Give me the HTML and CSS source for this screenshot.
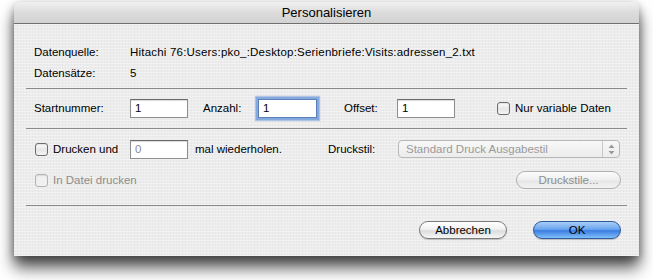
FILE: index.html
```html
<!DOCTYPE html>
<html lang="de">
<head>
    <meta charset="UTF-8">
    <title>Personalisieren</title>
    <link rel="stylesheet" href="styles.css">
</head>
<body>
    <div class="window">
        <div class="titlebar">Personalisieren</div>
        <div class="content">
            <div class="info">
                <div class="info-row">
                    <span class="info-label">Datenquelle:</span>
                    <span class="info-path">Hitachi 76:Users:pko_:Desktop:Serienbriefe:Visits:adressen_2.txt</span>
                </div>
                <div class="info-row">
                    <span class="info-label">Datensätze:</span>
                    <span>5</span>
                </div>
            </div>
            <hr class="sep">
            <div class="numbers">
                <span class="lbl lbl-start">Startnummer:</span>
                <input class="field" type="text" value="1">
                <span class="lbl lbl-count">Anzahl:</span>
                <input class="field field-count focused" type="text" value="1">
                <span class="lbl lbl-offset">Offset:</span>
                <input class="field" type="text" value="1">
                <label class="check check-variable"><span class="box"></span>Nur variable Daten</label>
            </div>
            <hr class="sep">
            <div class="print">
                <div class="print-row">
                    <label class="check check-repeat"><span class="box"></span>Drucken und</label>
                    <input class="field field-times" type="text" value="0">
                    <span class="lbl lbl-times">mal wiederholen.</span>
                    <span class="lbl lbl-style">Druckstil:</span>
                    <div class="select disabled">
                        <span>Standard Druck Ausgabestil</span>
                        <span class="stepper">
                            <svg width="7" height="11" viewBox="0 0 7 11"><path d="M3.5 0.5 L6.5 4 H0.5 Z M3.5 10.5 L6.5 7 H0.5 Z" fill="#9a9a9a"/></svg>
                        </span>
                    </div>
                </div>
                <div class="print-row">
                    <label class="check disabled"><span class="box"></span>In Datei drucken</label>
                    <button class="pill pill-styles" disabled>Druckstile...</button>
                </div>
            </div>
            <hr class="sep">
            <div class="actions">
                <button class="pill">Abbrechen</button>
                <button class="pill pill-default">OK</button>
            </div>
        </div>
    </div>
</body>
</html>
```

FILE: styles.css
```css
* {
    box-sizing: border-box;
    margin: 0;
    padding: 0;
}

html,
body {
    min-height: 280px;
}

body {
    background-color: #fff;
    font-family: 'Liberation Sans', Arial, sans-serif;
    font-size: 11.5px;
    color: #000;
    padding: 2px 0 24px 14px;
}

.window {
    width: 625px;
    height: 254px;
    border-radius: 6px 6px 0 0;
    background-color: #ececec;
    background-image: repeating-linear-gradient(0deg, rgba(255, 255, 255, 0.35) 0 1px, transparent 1px 3px),
        repeating-linear-gradient(90deg, rgba(0, 0, 0, 0.02) 0 1px, transparent 1px 3px);
    box-shadow: 0 12px 16px rgba(0, 0, 0, 0.65), 0 3px 10px rgba(0, 0, 0, 0.35);
    overflow: hidden;
}

.titlebar {
    height: 22px;
    line-height: 21px;
    text-align: center;
    font-size: 13px;
    background: linear-gradient(#f0f0f0, #dcdcdc 50%, #d2d2d2);
    border-bottom: 1px solid #6f6f6f;
}

.content {
    padding: 0 12px;
}

.sep {
    border: 0;
    height: 1px;
    background-color: #8a8a8a;
}

.info {
    padding: 17px 8px 5px;
}

.info-row {
    display: flex;
    height: 21px;
    align-items: center;
}

.info-label {
    width: 96px;
}

.info-path {
    letter-spacing: 0.2px;
}

/* Zeile mit Startnummer / Anzahl / Offset */
.numbers {
    display: flex;
    align-items: center;
    padding: 10px 8px 11px;
    height: 39px;
}

.lbl {
    white-space: nowrap;
}

.lbl-start {
    width: 96px;
}

.lbl-count {
    width: 55px;
    margin-left: 15px;
}

.lbl-offset {
    width: 53px;
    margin-left: 27px;
}

.field {
    width: 58px;
    height: 19px;
    font: inherit;
    padding: 0 4px;
    background: #fff;
    border: 1px solid #8e8e8e;
    border-top-color: #6a6a6a;
    box-shadow: inset 0 1px 1px rgba(0, 0, 0, 0.15);
    outline: none;
}

.field-count {
    width: 59px;
}

.focused {
    border-color: #5b7fb8;
    box-shadow: 0 0 0 2px #86a9dd, 0 0 1px 3px rgba(110, 150, 215, 0.5);
}

.check {
    display: flex;
    align-items: center;
    white-space: nowrap;
}

.box {
    width: 13px;
    height: 13px;
    margin-right: 5px;
    border: 1px solid #6d6d6d;
    border-radius: 3px;
    background: linear-gradient(#fdfdfd, #e6e6e6 55%, #f4f4f4);
    box-shadow: inset 0 1px 1px rgba(0, 0, 0, 0.1);
}

.check-variable {
    margin-left: 42px;
}

.check.disabled {
    color: #8c8c8c;
}

.check.disabled .box {
    border-color: #b4b4b4;
    background: #f0f0f0;
}

/* Drucken-Bereich */
.print {
    padding: 10px 6px 14px 9px;
    height: 76px;
}

.print-row {
    display: flex;
    align-items: center;
    height: 20px;
}

.print-row + .print-row {
    margin-top: 11px;
}

.check-repeat {
    width: 95px;
}

.field-times {
    color: #8c8c8c;
}

.lbl-times {
    margin-left: 7px;
    width: 133px;
}

.lbl-style {
    width: 70px;
}

.select {
    display: flex;
    align-items: center;
    justify-content: space-between;
    width: 222px;
    height: 18px;
    padding-left: 7px;
    border: 1px solid #b8b8b8;
    border-radius: 4px;
    background: linear-gradient(#f8f8f8, #ececec);
    color: #9a9a9a;
}

.stepper {
    display: flex;
    align-items: center;
    justify-content: center;
    width: 17px;
    height: 100%;
    border-left: 1px solid #c8c8c8;
}

.pill {
    height: 18px;
    width: 88px;
    font: inherit;
    color: #000;
    border: 1px solid #7b7b7b;
    border-radius: 9px;
    background: linear-gradient(#ffffff, #f2f2f2 45%, #dcdcdc 55%, #f6f6f6);
    box-shadow: 0 1px 1px rgba(0, 0, 0, 0.2);
}

.pill-styles {
    width: 105px;
    margin-left: auto;
    color: #8e8e8e;
    border-color: #b0b0b0;
    background: linear-gradient(#fbfbfb, #efefef 50%, #e6e6e6 55%, #f3f3f3);
    box-shadow: none;
}

.actions {
    display: flex;
    justify-content: flex-end;
    gap: 26px;
    padding: 15px 6px 0 0;
}

.pill-default {
    border-color: #2f5a9e;
    background: linear-gradient(#a9cdf7, #6aa6ee 45%, #3b7de0 55%, #7fc0fb);
}
```
